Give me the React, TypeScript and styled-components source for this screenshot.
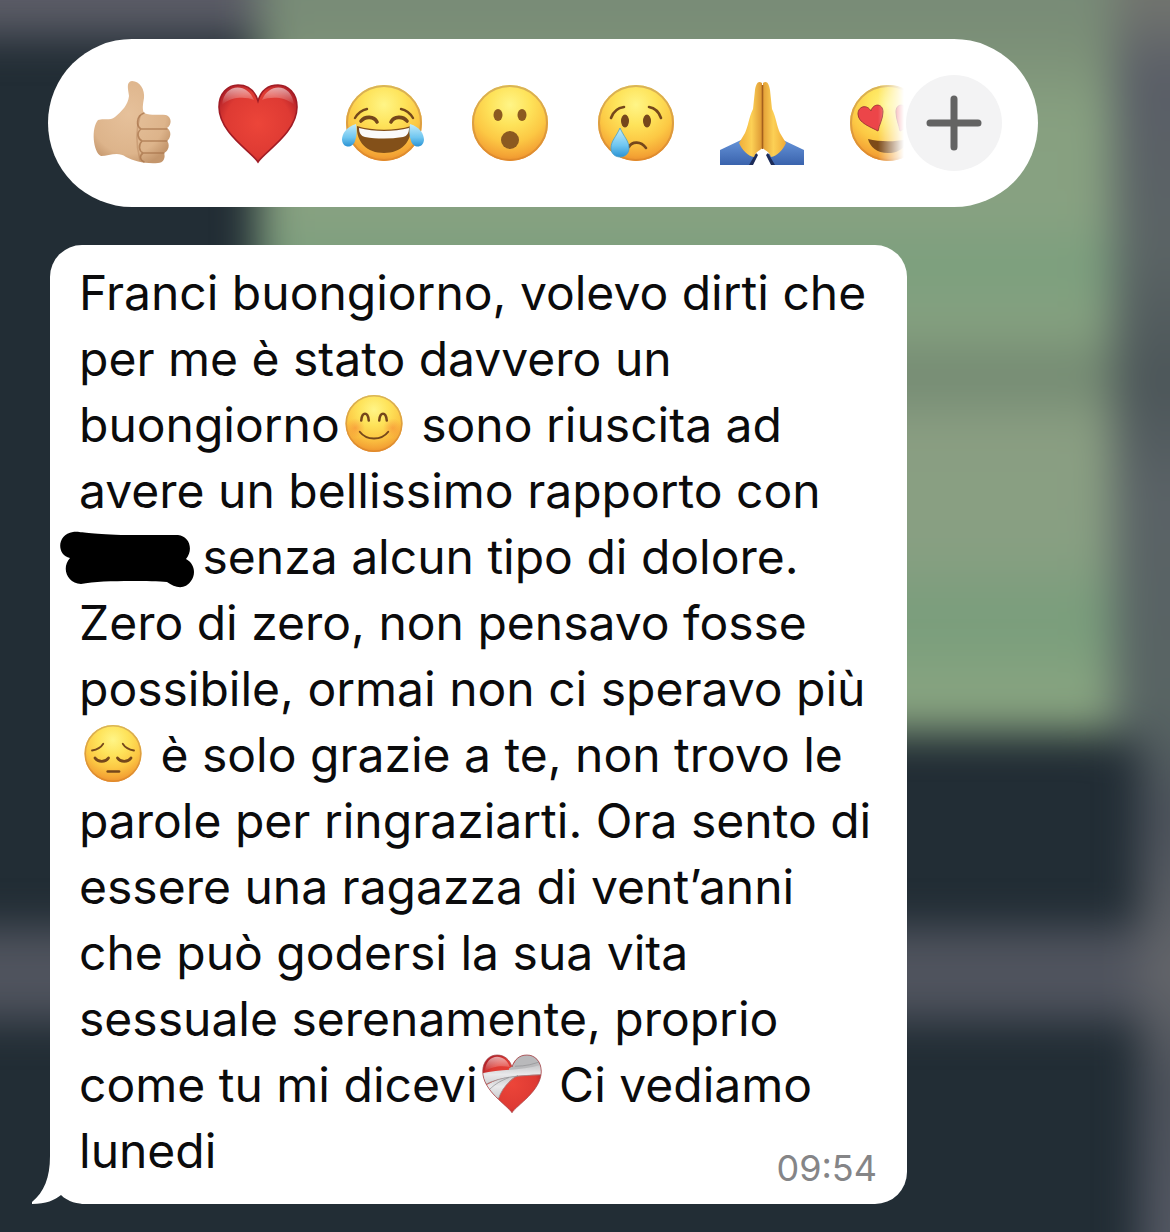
import React from 'react';
import styled, { createGlobalStyle } from 'styled-components';

const GlobalStyle = createGlobalStyle`
  * { box-sizing: border-box; }
  html, body { margin: 0; background: #222d35; }
`;

const Screen = styled.main`
  position: relative;
  isolation: isolate;
  overflow: hidden;
  min-height: 100vh;
  padding: 39px 48px 28px;
  display: flex;
  flex-direction: column;
  align-items: flex-start;
  gap: 38px;
  font-family: Inter, "Liberation Sans", sans-serif;
`;

const Wallpaper = styled.svg`
  position: absolute;
  inset: 0;
  z-index: -1;
  width: 100%;
  height: 100%;
`;

const ReactionBar = styled.div`
  display: flex;
  align-items: center;
  width: 100%;
  max-width: 990px;
  height: 168px;
  padding: 0 36px 0 42px;
  border-radius: 84px;
  background: #fff;
`;

const ReactionList = styled.div`
  display: flex;
  flex: 1;
  min-width: 0;
  gap: 42px;
  overflow: hidden;
  mask-image: linear-gradient(to right, #000 calc(100% - 28px), transparent calc(100% - 2px));
`;

const Reaction = styled.button`
  flex: none;
  width: 84px;
  height: 84px;
  padding: 0;
  border: 0;
  background: none;
  cursor: pointer;
`;

const MoreButton = styled.button`
  flex: none;
  display: grid;
  place-items: center;
  width: 96px;
  height: 96px;
  padding: 0;
  border: 0;
  border-radius: 50%;
  background: #f3f3f4;
  cursor: pointer;
`;

const Art = styled.svg`
  display: block;
  width: 100%;
  height: 100%;
`;

const Bubble = styled.article`
  position: relative;
  display: flex;
  flex-direction: column;
  width: 100%;
  max-width: 857px;
  margin-left: 2px;
  padding: 15px 30px 19px 29px;
  border-radius: 32px;
  background: #fff;
`;

const Tail = styled.svg`
  position: absolute;
  left: -18px;
  bottom: 0;
  width: 54px;
  height: 48px;
`;

const Message = styled.p`
  margin: 0;
  color: #0b0b0c;
  font-size: 48px;
  line-height: 66px;
`;

const InlineEmoji = styled.span`
  display: inline-block;
  width: 68px;
  height: 63px;
  padding: 0 4px;
  vertical-align: -13px;
`;

const Redaction = styled.span`
  display: inline-block;
  width: 110px;
  height: 60px;
  vertical-align: -15px;

  svg {
    display: block;
    width: 134px;
    height: 60px;
    margin-left: -19px;
  }
`;

const Time = styled.time`
  align-self: flex-end;
  margin-top: -33px;
  color: #858587;
  font-size: 36px;
  line-height: 34px;
`;

type ArtProps = { label: string; box?: string; children: React.ReactNode };
const Emoji = ({ label, box = '0 0 84 84', children }: ArtProps) => (
  <Art viewBox={box} role="img" aria-label={label}>{children}</Art>
);

const Face = () => (
  <>
    <circle cx="42" cy="42" r="38" fill="url(#face)" />
    <circle cx="42" cy="42" r="37" fill="none" stroke="url(#rim)" strokeWidth="2" />
  </>
);

const SharedPaints = styled.svg`
  position: absolute;
  width: 0;
  height: 0;
`;

const Paints = () => (
  <SharedPaints aria-hidden="true">
    <defs>
      <radialGradient id="face" cx="0.5" cy="0.26" r="0.76">
        <stop offset="0" stopColor="#fff587" />
        <stop offset="0.35" stopColor="#fee35a" />
        <stop offset="0.65" stopColor="#fcc844" />
        <stop offset="0.88" stopColor="#f4a435" />
        <stop offset="1" stopColor="#e98b2b" />
      </radialGradient>
      <linearGradient id="rim" x1="0" y1="0" x2="0" y2="1">
        <stop offset="0" stopColor="#d9b458" />
        <stop offset="1" stopColor="#e0892b" />
      </linearGradient>
      <radialGradient id="heart" cx="0.5" cy="0.5" r="0.6">
        <stop offset="0" stopColor="#ec4539" />
        <stop offset="0.7" stopColor="#de3a33" />
        <stop offset="1" stopColor="#b01f27" />
      </radialGradient>
      <linearGradient id="shine" x1="0" y1="0" x2="0" y2="1">
        <stop offset="0" stopColor="#fff" stopOpacity="0.6" />
        <stop offset="1" stopColor="#fff" stopOpacity="0" />
      </linearGradient>
      <linearGradient id="tear" x1="0" y1="0" x2="0" y2="1">
        <stop offset="0" stopColor="#c4ecfa" />
        <stop offset="0.6" stopColor="#6fc6f0" />
        <stop offset="1" stopColor="#2b93d4" />
      </linearGradient>
      <radialGradient id="skin" cx="0.45" cy="0.4" r="0.65">
        <stop offset="0" stopColor="#e6c19b" />
        <stop offset="0.75" stopColor="#ddb48b" />
        <stop offset="1" stopColor="#c4966c" />
      </radialGradient>
      <linearGradient id="palmLeft" x1="0" y1="0" x2="1" y2="0">
        <stop offset="0" stopColor="#f0ae3a" />
        <stop offset="0.55" stopColor="#fcd055" />
        <stop offset="1" stopColor="#dd9733" />
      </linearGradient>
      <linearGradient id="palmRight" x1="0" y1="0" x2="1" y2="0">
        <stop offset="0" stopColor="#e3a037" />
        <stop offset="0.45" stopColor="#fcd055" />
        <stop offset="1" stopColor="#efaa38" />
      </linearGradient>
      <linearGradient id="sleeve" x1="0" y1="0" x2="0" y2="1">
        <stop offset="0" stopColor="#6593d8" />
        <stop offset="1" stopColor="#3a63ad" />
      </linearGradient>
      <linearGradient id="bandage" x1="0" y1="0" x2="0" y2="1">
        <stop offset="0" stopColor="#c4c4c6" />
        <stop offset="0.5" stopColor="#e9e9eb" />
        <stop offset="1" stopColor="#cdcdcf" />
      </linearGradient>
      <radialGradient id="cheek">
        <stop offset="0" stopColor="#f26a2e" stopOpacity="0.4" />
        <stop offset="1" stopColor="#f26a2e" stopOpacity="0" />
      </radialGradient>
    </defs>
  </SharedPaints>
);

const heartPath = 'M42 81C36 71 3 52 3 26C3 12 12 4 22 4C32 4 39 10 42 20C45 10 52 4 62 4C72 4 81 12 81 26C81 52 48 71 42 81Z';
const ink = '#75471b';

const ThumbsUp = () => (
  <Emoji label="Pollice in su">
    <path d="M8 39C13 37 20 40 25 36C32 30 38 24 39 15C38 7 36 1 42 0C50 0 55 9 54 17C53 23 52 28 54 32C62 35 68 33 76 34C82 36 82 44 77 47C82 50 81 57 77 60C80 63 79 70 74 72C76 77 73 82 68 82C55 83 44 80 36 76C28 70 19 75 11 75C3 71 1 47 8 39Z" fill="url(#skin)" />
    <g fill="none" stroke="#a8744b" strokeOpacity="0.75" strokeWidth="1.6" strokeLinecap="round">
      <path d="M54 32C46 35 46 45 51 48H77M51 48C46 52 48 58 52 60H77M52 60C48 64 49 70 53 72H74M53 72C49 75 50 79 54 81" />
      <path d="M50 35C46 48 46 64 50 79" strokeOpacity="0.35" />
    </g>
  </Emoji>
);

const Heart = () => (
  <Emoji label="Cuore rosso">
    <path d={heartPath} fill="url(#heart)" />
    <path d={heartPath} fill="none" stroke="#a01c25" strokeWidth="1.6" />
    <path d="M6 24C8 2 31 1 38 19C30 16 16 15 6 24ZM46 19C53 1 76 2 78 24C68 15 54 16 46 19Z" fill="url(#shine)" />
  </Emoji>
);

const Joy = () => (
  <Emoji label="Lacrime di gioia">
    <Face />
    <g fill="none" stroke={ink} strokeLinecap="round" strokeLinejoin="round">
      <path d="M13 37C16 32 20 29 25 28M59 28C64 29 68 32 71 37" strokeWidth="2.4" />
      <path d="M19 40C23 35 32 35 35 41M49 41C52 35 61 35 65 40" strokeWidth="3.6" />
    </g>
    <path d="M15 45C31 50 53 50 69 45C70 61 59 72 42 72C25 72 14 61 15 45Z" fill="#835019" />
    <path d="M17 47C32 51 52 51 67 47C67 52 65 55 61 56C48 58 35 58 23 56C19 55 17 52 17 47Z" fill="#fafafa" />
    <path d="M14 43C4 46 0 53 0 59C1 68 11 67 13 60C15 55 15 49 14 43ZM68 43C78 46 82 53 82 59C81 68 71 67 69 60C67 55 67 49 68 43Z" fill="url(#tear)" />
  </Emoji>
);

const Surprise = () => (
  <Emoji label="Faccina sorpresa">
    <Face />
    <g fill="#8b5920">
      <ellipse cx="30" cy="34" rx="4.5" ry="6" />
      <ellipse cx="54" cy="34" rx="4.5" ry="6" />
      <circle cx="42" cy="59" r="9" />
    </g>
  </Emoji>
);

const Crying = () => (
  <Emoji label="Faccina che piange">
    <Face />
    <ellipse cx="31" cy="40" rx="4" ry="6.5" fill={ink} />
    <ellipse cx="53" cy="40" rx="4" ry="6.5" fill={ink} />
    <path d="M17 37C19 31 23 27 30 26M55 26C61 27 65 31 67 37M35 66C38 60 47 60 52 67" fill="none" stroke={ink} strokeWidth="2.6" strokeLinecap="round" />
    <path d="M26 47C22 56 17 60 17 67C17 79 35 79 35 67C35 60 30 56 26 47Z" fill="url(#tear)" stroke="#459fce" strokeWidth="0.8" />
  </Emoji>
);

const Pray = () => (
  <Emoji label="Mani giunte">
    <path d="M0 69L21 59C25 67 30 74 36 73L30 84H0ZM84 69L63 59C59 67 54 74 48 73L54 84H84Z" fill="url(#sleeve)" />
    <path d="M36 72L29 84H33L38 74ZM48 72L55 84H51L46 74Z" fill="#1c2b59" />
    <path d="M42 2C38-1 36 3 35 9L33 28C29 36 28 46 25 52L19 62C22 69 28 75 34 76C36 70 41 69 42 67Z" fill="url(#palmLeft)" />
    <path d="M43 2C47-1 49 3 50 9L52 28C56 36 57 46 60 52L66 62C63 69 57 75 51 76C49 70 44 69 43 67Z" fill="url(#palmRight)" />
    <path d="M42.5 4V68" stroke="#a4601d" strokeWidth="1.6" />
  </Emoji>
);

const HeartEyes = () => (
  <Emoji label="Occhi a cuore">
    <Face />
    <path d="M32 50C25 46 12 42 12 33C12 25 21 23 25 30C27 22 37 22 37 31C37 38 33 44 32 50Z" fill="#ec4549" stroke="#a23736" strokeWidth="1" />
    <path d="M54 50C61 46 74 42 74 33C74 25 65 23 61 30C59 22 50 22 50 31C50 38 53 44 54 50Z" fill="#ec4549" stroke="#a23736" strokeWidth="1" />
    <path d="M22 58C34 61 50 61 62 58C60 66 53 72 42 72C31 72 24 66 22 58Z" fill="#7d4b18" />
  </Emoji>
);

const Smile = () => (
  <Emoji label="Faccina sorridente" box="2 0 80 84">
    <Face />
    <circle cx="17" cy="48" r="13" fill="url(#cheek)" />
    <circle cx="67" cy="48" r="13" fill="url(#cheek)" />
    <path d="M25 38C26 26 34 26 35 38M49 38C50 26 58 26 59 38" fill="none" stroke={ink} strokeWidth="3.4" strokeLinecap="round" />
    <path d="M23 53C32 65 52 65 61 53" fill="none" stroke={ink} strokeWidth="2.6" strokeLinecap="round" />
  </Emoji>
);

const Pensive = () => (
  <Emoji label="Faccina pensierosa" box="2 0 80 84">
    <Face />
    <path d="M14 38C20 37 26 34 29 29M55 29C58 34 64 37 70 38" fill="none" stroke={ink} strokeWidth="2.4" strokeLinecap="round" />
    <path d="M18 48C22 54 32 54 36 48M48 48C52 54 62 54 66 48" fill="none" stroke={ink} strokeWidth="3.8" strokeLinecap="round" />
    <path d="M35 66H50" stroke={ink} strokeWidth="3.6" strokeLinecap="round" />
  </Emoji>
);

const MendingHeart = () => (
  <Emoji label="Cuore che guarisce" box="2 0 80 84">
    <clipPath id="heartClip"><path d={heartPath} /></clipPath>
    <path d={heartPath} fill="url(#heart)" />
    <path d="M6 26C7 1 33 1 39 20C30 18 16 18 6 26Z" fill="url(#shine)" />
    <g clipPath="url(#heartClip)">
      <path d="M38 22C46 18 48 4 58 0H84V26C66 26 50 24 38 31Z" fill="#b9b9bb" />
      <path d="M8 44C22 36 38 32 50 30C36 39 28 50 24 62L8 52Z" fill="url(#bandage)" />
      <path d="M0 29C25 22 56 26 84 16V30C56 31 30 31 5 44Z" fill="url(#bandage)" />
      <path d="M5 44C30 31 56 32 84 30M50 31C37 39 28 50 24 62M12 50C20 42 28 38 38 34M46 19C60 19 72 16 81 12" fill="none" stroke="#949497" strokeWidth="1" />
    </g>
    <path d={heartPath} fill="none" stroke="#a6464a" strokeWidth="1" />
  </Emoji>
);

const reactions = [ThumbsUp, Heart, Joy, Surprise, Crying, Pray, HeartEyes];

const Backdrop = () => (
  <Wallpaper viewBox="0 0 1170 1232" preserveAspectRatio="none" aria-hidden="true">
    <defs>
      <filter id="soft" x="-20%" y="-20%" width="140%" height="140%" colorInterpolationFilters="sRGB">
        <feGaussianBlur stdDeviation="21" />
      </filter>
      <linearGradient id="field" x1="0" y1="0" x2="0" y2="720" gradientUnits="userSpaceOnUse">
        <stop offset="0" stopColor="#788b77" />
        <stop offset="0.06" stopColor="#7b8f77" />
        <stop offset="0.16" stopColor="#87a080" />
        <stop offset="0.31" stopColor="#87a181" />
        <stop offset="0.36" stopColor="#7a9f7d" />
        <stop offset="0.45" stopColor="#86a180" />
        <stop offset="0.52" stopColor="#728871" />
        <stop offset="0.6" stopColor="#8a9e82" />
        <stop offset="0.76" stopColor="#889f82" />
        <stop offset="0.86" stopColor="#789d7b" />
        <stop offset="1" stopColor="#8ca682" />
      </linearGradient>
      <linearGradient id="side" x1="0" y1="0" x2="0" y2="1232" gradientUnits="userSpaceOnUse">
        <stop offset="0" stopColor="#72756f" />
        <stop offset="0.06" stopColor="#5a5e67" />
        <stop offset="0.2" stopColor="#5b6465" />
        <stop offset="0.31" stopColor="#4c5659" />
        <stop offset="0.4" stopColor="#5a6266" />
        <stop offset="0.58" stopColor="#586463" />
        <stop offset="0.66" stopColor="#4d535c" />
        <stop offset="0.79" stopColor="#64666b" />
        <stop offset="0.88" stopColor="#4e535c" />
        <stop offset="1" stopColor="#545863" />
      </linearGradient>
    </defs>
    <rect width="1170" height="1232" fill="#222d35" />
    <g filter="url(#soft)">
      <rect x="-80" y="-80" width="1330" height="116" fill="#5b5c66" />
      <rect x="-80" y="928" width="1330" height="92" fill="#50545e" />
      <rect x="1108" y="-80" width="142" height="820" fill="url(#side)" />
      <rect x="1140" y="740" width="110" height="600" fill="url(#side)" />
      <rect x="258" y="-80" width="856" height="812" fill="url(#field)" />
    </g>
  </Wallpaper>
);

export default function App() {
  return (
    <>
      <GlobalStyle />
      <Paints />
      <Screen>
        <Backdrop />
        <ReactionBar>
          <ReactionList>
            {reactions.map((Icon, i) => (
              <Reaction key={i} type="button"><Icon /></Reaction>
            ))}
          </ReactionList>
          <MoreButton type="button" aria-label="Altre reazioni">
            <svg width="56" height="56" viewBox="0 0 56 56" aria-hidden="true">
              <path d="M28 4V52M4 28H52" stroke="#636363" strokeWidth="7" strokeLinecap="round" />
            </svg>
          </MoreButton>
        </ReactionBar>
        <Bubble>
          <Tail viewBox="0 0 54 48" aria-hidden="true">
            <path d="M20 38H40L50 48H10Z" fill="#222d35" />
            <path d="M18 0C18 22 12 36 0 46V48C14 48 23 44 29 39C36 46 46 48 54 48V38H32V0Z" fill="#fff" />
          </Tail>
          <Message>
            <span>Franci buongiorno, volevo dirti che</span>{' '}
            <span>per me è stato davvero un</span>{' '}
            <span>buongiorno</span>
            <InlineEmoji><Smile /></InlineEmoji>{' '}
            <span>sono riuscita ad</span>{' '}
            <span>avere un bellissimo rapporto con</span>{' '}
            <Redaction>
              <svg viewBox="0 0 134 60" aria-hidden="true">
                <path d="M13 3C19 2 25 5 61 6H118C129 7 134 20 126 30C135 35 136 45 131 52C125 61 115 59 107 53C90 52 43 51 21 55C7 54 1 39 10 29C-4 26-3 5 13 3Z" fill="#000" />
              </svg>
            </Redaction>{' '}
            <span>senza alcun tipo di dolore.</span>{' '}
            <span>Zero di zero, non pensavo fosse</span>{' '}
            <span>possibile, ormai non ci speravo più</span>{' '}
            <InlineEmoji><Pensive /></InlineEmoji>{' '}
            <span>è solo grazie a te, non trovo le</span>{' '}
            <span>parole per ringraziarti. Ora sento di</span>{' '}
            <span>essere una ragazza di vent’anni</span>{' '}
            <span>che può godersi la sua vita</span>{' '}
            <span>sessuale serenamente, proprio</span>{' '}
            <span>come tu mi dicevi</span>
            <InlineEmoji><MendingHeart /></InlineEmoji>{' '}
            <span>Ci vediamo</span>{' '}
            <span>lunedi</span>
          </Message>
          <Time dateTime="09:54">09:54</Time>
        </Bubble>
      </Screen>
    </>
  );
}
